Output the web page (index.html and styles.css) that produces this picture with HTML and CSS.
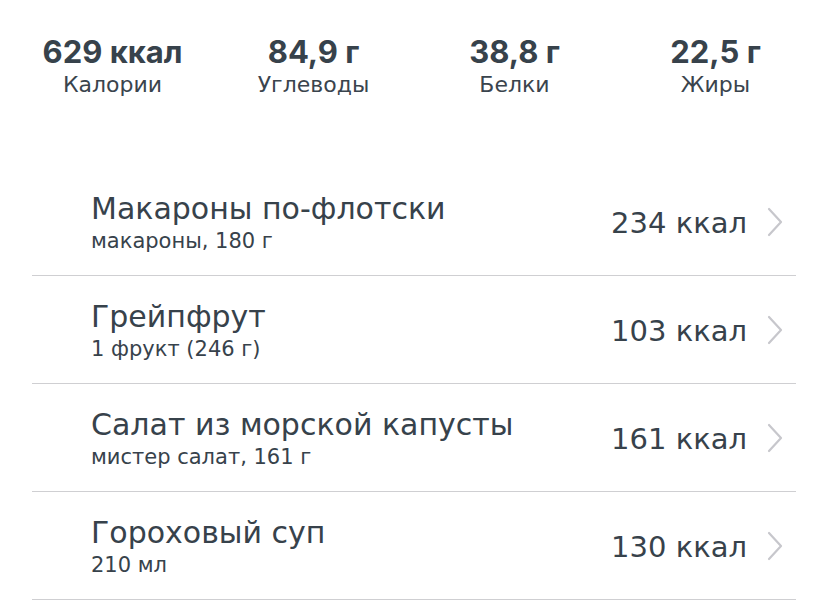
FILE: index.html
```html
<!DOCTYPE html>
<html lang="ru">
<head>
<meta charset="utf-8">
<link rel="stylesheet" href="styles.css">
</head>
<body>
<div class="stats">
  <div class="stat"><div class="value">629 ккал</div><div class="label">Калории</div></div>
  <div class="stat"><div class="value">84,9 г</div><div class="label">Углеводы</div></div>
  <div class="stat"><div class="value">38,8 г</div><div class="label">Белки</div></div>
  <div class="stat"><div class="value">22,5 г</div><div class="label">Жиры</div></div>
</div>
<div class="list">
  <div class="row">
    <div class="info"><div class="title">Макароны по-флотски</div><div class="sub">макароны, 180 г</div></div>
    <div class="kcal">234 ккал</div>
    <svg class="chev" width="16" height="30" viewBox="0 0 16 30"><path d="M2 2 L14 15 L2 28" fill="none" stroke="#c7c7cc" stroke-width="2.2" stroke-linecap="round" stroke-linejoin="round"/></svg>
  </div>
  <div class="row">
    <div class="info"><div class="title">Грейпфрут</div><div class="sub">1 фрукт (246 г)</div></div>
    <div class="kcal">103 ккал</div>
    <svg class="chev" width="16" height="30" viewBox="0 0 16 30"><path d="M2 2 L14 15 L2 28" fill="none" stroke="#c7c7cc" stroke-width="2.2" stroke-linecap="round" stroke-linejoin="round"/></svg>
  </div>
  <div class="row">
    <div class="info"><div class="title">Салат из морской капусты</div><div class="sub">мистер салат, 161 г</div></div>
    <div class="kcal">161 ккал</div>
    <svg class="chev" width="16" height="30" viewBox="0 0 16 30"><path d="M2 2 L14 15 L2 28" fill="none" stroke="#c7c7cc" stroke-width="2.2" stroke-linecap="round" stroke-linejoin="round"/></svg>
  </div>
  <div class="row">
    <div class="info"><div class="title">Гороховый суп</div><div class="sub">210 мл</div></div>
    <div class="kcal">130 ккал</div>
    <svg class="chev" width="16" height="30" viewBox="0 0 16 30"><path d="M2 2 L14 15 L2 28" fill="none" stroke="#c7c7cc" stroke-width="2.2" stroke-linecap="round" stroke-linejoin="round"/></svg>
  </div>
</div>
</body>
</html>
```
FILE: styles.css
```css
html, body {
  margin: 0;
  background: #fff;
}
body {
  font-family: "DejaVu Sans", Inter, sans-serif;
  color: #37424b;
  width: 828px;
  height: 616px;
  overflow: hidden;
}
.stats {
  display: grid;
  grid-template-columns: repeat(4, 1fr);
  padding: 34px 12px 0;
}
.stat {
  text-align: center;
}
.value {
  font-family: Inter, sans-serif;
  font-size: 31px;
  font-weight: 700;
  line-height: 36px;
}
.label {
  font-size: 22px;
  line-height: 30px;
  color: #3a444d;
}
.list {
  margin: 68px 32px 0;
}
.row {
  display: flex;
  align-items: center;
  height: 107px;
  border-bottom: 1px solid #cfcfd2;
  padding: 0 13px 0 59px;
}
.info {
  flex: 1;
  padding-top: 3px;
}
.title {
  font-size: 30px;
  line-height: 34px;
}
.sub {
  font-size: 21px;
  line-height: 28px;
  margin-top: 1px;
}
.kcal {
  font-size: 29px;
  margin-right: 20px;
  padding-top: 2px;
}
.chev {
  display: block;
}
```
